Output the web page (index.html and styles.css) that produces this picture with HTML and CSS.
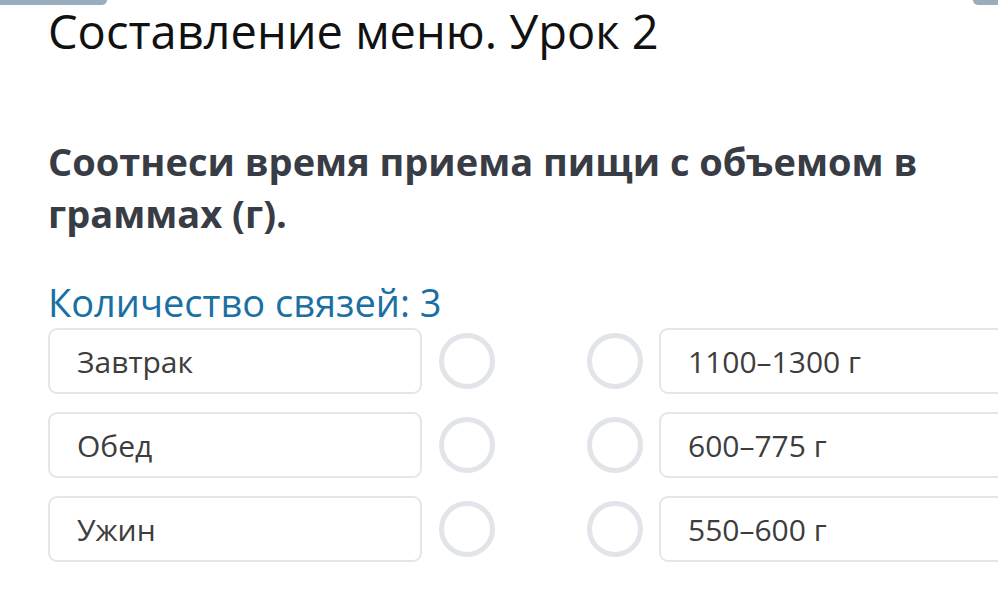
FILE: index.html
```html
<!DOCTYPE html>
<html lang="ru">
<head>
<meta charset="utf-8">
<title>Составление меню. Урок 2</title>
<link rel="stylesheet" href="styles.css">
</head>
<body>
<div class="corner corner-left"></div>
<div class="corner corner-right"></div>
<main class="page">
  <h1 class="title">Составление меню. Урок 2</h1>
  <p class="question">Соотнеси время приема пищи с объемом в граммах (г).</p>
  <p class="count">Количество связей: 3</p>
  <div class="pairs">
    <div class="row">
      <div class="item">Завтрак</div>
      <span class="dot dot-left"></span>
      <span class="dot dot-right"></span>
      <div class="item">1100–1300 г</div>
    </div>
    <div class="row">
      <div class="item">Обед</div>
      <span class="dot dot-left"></span>
      <span class="dot dot-right"></span>
      <div class="item">600–775 г</div>
    </div>
    <div class="row">
      <div class="item">Ужин</div>
      <span class="dot dot-left"></span>
      <span class="dot dot-right"></span>
      <div class="item">550–600 г</div>
    </div>
  </div>
</main>
</body>
</html>
```
FILE: styles.css
```css
html, body {
  margin: 0;
  padding: 0;
  background: #fff;
  overflow: hidden;
  width: 998px;
  height: 590px;
}
body {
  position: relative;
  font-family: "Open Sans", "Noto Sans", sans-serif;
}
.corner {
  position: absolute;
  top: 0;
  height: 5px;
  background: #9aadbd;
}
.corner-left {
  left: 0;
  width: 107px;
  border-bottom-right-radius: 6px;
}
.corner-right {
  right: 0;
  width: 25px;
  border-bottom-left-radius: 8px;
}
.page {
  padding: 0 0 0 48px;
}
.title {
  margin: 0;
  padding-top: 0;
  font-size: 47px;
  line-height: 62px;
  font-weight: 400;
  color: #111;
}
.question {
  margin: 73px 0 0;
  font-size: 38px;
  line-height: 52px;
  font-weight: 700;
  color: #383c44;
  width: 920px;
}
.count {
  margin: 43px 0 0;
  font-size: 38px;
  line-height: 40px;
  color: #1a6fa3;
}
.pairs {
  margin-top: 6px;
  display: flex;
  flex-direction: column;
  gap: 18px;
}
.row {
  display: flex;
  align-items: center;
  height: 66px;
}
.item {
  box-sizing: border-box;
  flex: none;
  width: 374px;
  height: 66px;
  border: 2px solid #e5e6e8;
  border-radius: 9px;
  padding-left: 27px;
  display: flex;
  align-items: center;
  font-size: 30px;
  color: #3d3d3d;
}
.dot {
  box-sizing: border-box;
  flex: none;
  width: 56px;
  height: 56px;
  border: 5px solid #e1e4e8;
  border-radius: 50%;
}
.dot-left {
  margin-left: 17px;
}
.dot-right {
  margin-left: 92px;
  margin-right: 16px;
}
```
